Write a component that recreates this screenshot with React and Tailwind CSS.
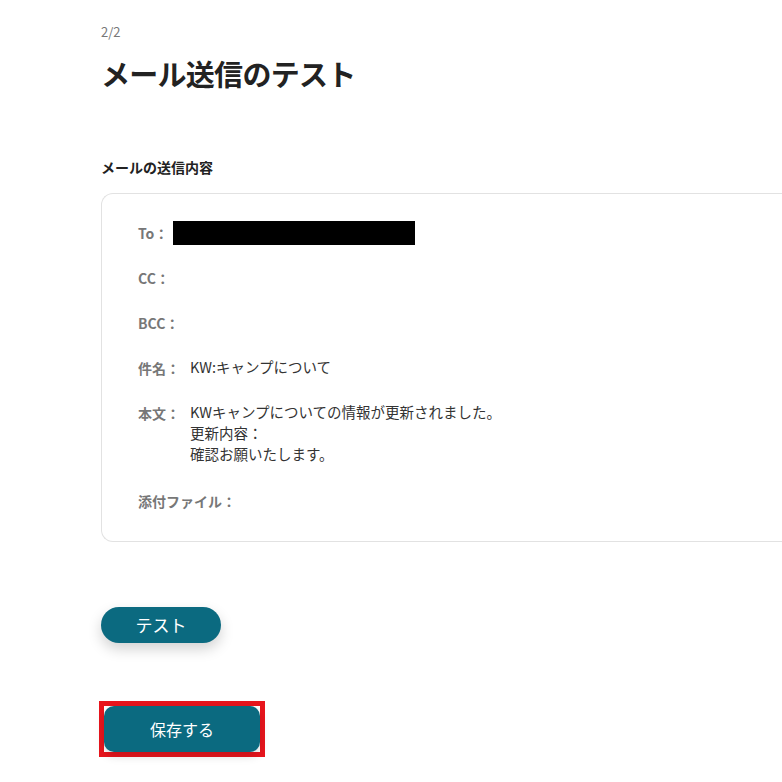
const rows = [
  { label: "To：", redacted: true },
  { label: "CC：" },
  { label: "BCC：" },
  { label: "件名：", value: ["KW:キャンプについて"] },
  { label: "本文：", value: ["KWキャンプについての情報が更新されました。", "更新内容：", "確認お願いたします。"] },
  { label: "添付ファイル：", last: true },
];

export default function App() {
  return (
    <div
      className="min-h-[782px] w-[782px] overflow-hidden bg-white pl-[101px] text-[#222]"
      style={{ fontFamily: '"Noto Sans CJK JP", "Noto Sans", sans-serif' }}
    >
      <p className="pt-[22px] text-[13px] leading-[20px] text-[#777]">2/2</p>
      <h1 className="mt-[16px] text-[29px] font-bold leading-[30px] tracking-tight text-[#222]">メール送信のテスト</h1>

      <h2 className="mt-[69px] text-[14px] font-bold leading-[20px] text-[#222]">メールの送信内容</h2>

      <div className="mt-[16px] h-[349px] w-[720px] rounded-l-xl border border-r-0 border-[#e2e2e2] pl-[36px] pt-[27px]">
        <div className="flex flex-col gap-[21px]">
          {rows.map((row) => (
            <div key={row.label} className={`flex min-h-[24px] items-start ${row.last ? "mt-[4px]" : ""}`}>
              <span className="shrink-0 pr-[10px] text-[14px] font-bold leading-[24px] text-[#777]">{row.label}</span>
              {row.redacted ? (
                <span className="ml-[-5px] block h-[24px] w-[242px] bg-black" />
              ) : null}
              {row.value ? (
                <div className="text-[14.5px] leading-[21px] text-[#333]">
                  {row.value.map((line) => (
                    <p key={line}>{line}</p>
                  ))}
                </div>
              ) : null}
            </div>
          ))}
        </div>
      </div>

      <button
        type="button"
        className="mt-[65px] block h-[36px] w-[120px] rounded-full bg-[#0b6a80] text-[17px] text-white shadow-[0_6px_14px_rgba(0,0,0,0.18)]"
      >
        テスト
      </button>

      <div className="ml-[-2px] mt-[58px] inline-block border-[5px] border-[#e8151d]">
        <button
          type="button"
          className="block h-[46px] w-[156px] rounded-[10px] bg-[#0b6a80] text-[16px] text-white shadow-[0_4px_10px_rgba(0,0,0,0.15)]"
        >
          保存する
        </button>
      </div>
    </div>
  );
}
